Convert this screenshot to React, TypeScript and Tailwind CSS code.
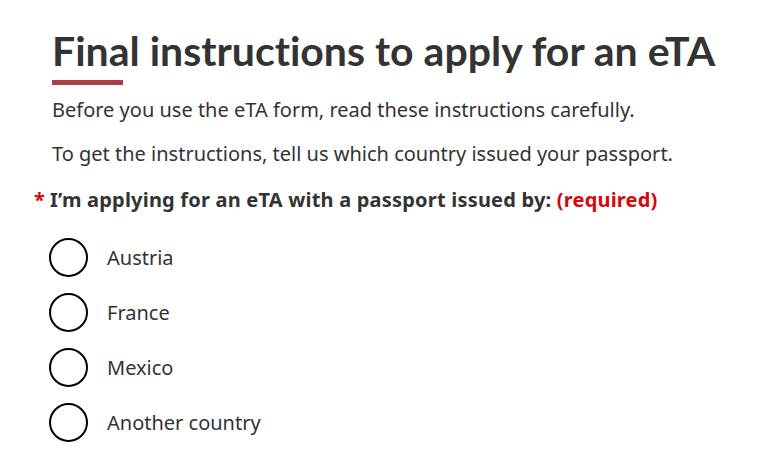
import React, { useState } from 'react';

const countries = ['Austria', 'France', 'Mexico', 'Another country'];

export default function App() {
  const [selected, setSelected] = useState<string | null>(null);

  return (
    <div className="min-h-[470px] w-[781px] bg-white text-[#333] [font-family:'Noto_Sans',sans-serif]">
      <div className="pl-[52px] pt-[23px]">
        <h1 className="text-[41px] font-bold leading-[56px] text-[#333] [font-variant-ligatures:none] [font-family:Lato,sans-serif]">
          Final instructions to apply for an eTA
        </h1>
        <div className="mt-[1px] h-[5px] w-[71px] bg-[#af3c43]" />
        <p className="mt-[10px] text-[20px] leading-[30px]">
          Before you use the eTA form, read these instructions carefully.
        </p>
        <p className="mt-[14px] text-[20px] leading-[30px]">
          To get the instructions, tell us which country issued your passport.
        </p>
      </div>
      <fieldset className="mt-[16px] pl-[34px]">
        <legend className="text-[20px] font-bold leading-[30px] tracking-[0.2px]">
          <span className="mr-[5px] text-[#d3080c]">*</span>
          I’m applying for an eTA with a passport issued by:{' '}
          <span className="text-[#d3080c]">(required)</span>
        </legend>
        <div className="mt-[23px] flex flex-col gap-[16px] pl-[15px]">
          {countries.map((c) => (
            <label key={c} className="flex h-[39px] cursor-pointer items-center gap-[19px]">
              <span className="flex h-[39px] w-[39px] shrink-0 items-center justify-center rounded-full border-2 border-black">
                {selected === c && <span className="h-[25px] w-[25px] rounded-full bg-black" />}
              </span>
              <input
                type="radio"
                name="country"
                className="sr-only"
                checked={selected === c}
                onChange={() => setSelected(c)}
              />
              <span className="text-[20px] leading-[30px]">{c}</span>
            </label>
          ))}
        </div>
      </fieldset>
    </div>
  );
}
